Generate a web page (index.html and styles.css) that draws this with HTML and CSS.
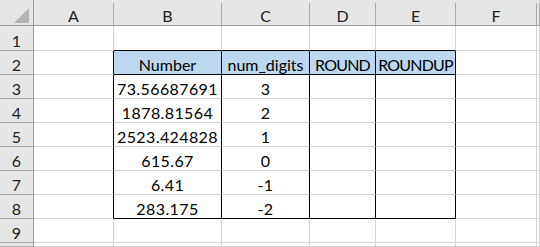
FILE: index.html
```html
<!DOCTYPE html>
<html lang="en">
<head>
    <meta charset="UTF-8">
    <title>ROUND vs ROUNDUP</title>
    <link rel="stylesheet" href="styles.css">
</head>
<body>
    <div class="sheet">
        <!-- column headers -->
        <div class="cell corner"><span class="corner-mark"></span></div>
        <div class="cell col-head">A</div>
        <div class="cell col-head">B</div>
        <div class="cell col-head">C</div>
        <div class="cell col-head">D</div>
        <div class="cell col-head">E</div>
        <div class="cell col-head">F</div>
        <div class="cell col-head"></div>

        <!-- row 1 -->
        <div class="cell row-head">1</div>
        <div class="cell"></div>
        <div class="cell above"></div>
        <div class="cell above"></div>
        <div class="cell above"></div>
        <div class="cell above"></div>
        <div class="cell"></div>
        <div class="cell"></div>

        <!-- row 2: table header -->
        <div class="cell row-head">2</div>
        <div class="cell before"></div>
        <div class="cell tbl head">Number</div>
        <div class="cell tbl head">num_digits</div>
        <div class="cell tbl head caps">ROUND</div>
        <div class="cell tbl head caps">ROUNDUP</div>
        <div class="cell"></div>
        <div class="cell"></div>

        <div class="cell row-head">3</div>
        <div class="cell before"></div>
        <div class="cell tbl num">73.56687691</div>
        <div class="cell tbl num">3</div>
        <div class="cell tbl"></div>
        <div class="cell tbl"></div>
        <div class="cell"></div>
        <div class="cell"></div>

        <div class="cell row-head">4</div>
        <div class="cell before"></div>
        <div class="cell tbl num">1878.81564</div>
        <div class="cell tbl num">2</div>
        <div class="cell tbl"></div>
        <div class="cell tbl"></div>
        <div class="cell"></div>
        <div class="cell"></div>

        <div class="cell row-head">5</div>
        <div class="cell before"></div>
        <div class="cell tbl num">2523.424828</div>
        <div class="cell tbl num">1</div>
        <div class="cell tbl"></div>
        <div class="cell tbl"></div>
        <div class="cell"></div>
        <div class="cell"></div>

        <div class="cell row-head">6</div>
        <div class="cell before"></div>
        <div class="cell tbl num">615.67</div>
        <div class="cell tbl num">0</div>
        <div class="cell tbl"></div>
        <div class="cell tbl"></div>
        <div class="cell"></div>
        <div class="cell"></div>

        <div class="cell row-head">7</div>
        <div class="cell before"></div>
        <div class="cell tbl num">6.41</div>
        <div class="cell tbl num">-1</div>
        <div class="cell tbl"></div>
        <div class="cell tbl"></div>
        <div class="cell"></div>
        <div class="cell"></div>

        <div class="cell row-head">8</div>
        <div class="cell before"></div>
        <div class="cell tbl num last">283.175</div>
        <div class="cell tbl num last">-2</div>
        <div class="cell tbl last"></div>
        <div class="cell tbl last"></div>
        <div class="cell"></div>
        <div class="cell"></div>

        <div class="cell row-head">9</div>
        <div class="cell"></div>
        <div class="cell"></div>
        <div class="cell"></div>
        <div class="cell"></div>
        <div class="cell"></div>
        <div class="cell"></div>
        <div class="cell"></div>

        <!-- row 10, cut off by the window -->
        <div class="cell row-head"></div>
        <div class="cell"></div>
        <div class="cell"></div>
        <div class="cell"></div>
        <div class="cell"></div>
        <div class="cell"></div>
        <div class="cell"></div>
        <div class="cell"></div>
    </div>
</body>
</html>
```

FILE: styles.css
```css
body {
    margin: 0;
    padding: 0;
    background: #ffffff;
    overflow: hidden;
}

/* Sheet grid: widths/heights include each cell's right/bottom line */
.sheet {
    display: grid;
    grid-template-columns: 34px 80px 108px 88px 66px 80px 81px 1fr;
    grid-template-rows: 26px 25px repeat(8, 24px) 1fr;
    width: 540px;
    height: 247px;
    font-family: 'Lato', 'Carlito', 'Liberation Sans', sans-serif;
    font-size: 16px;
    color: #000000;
}

.cell {
    box-sizing: border-box;
    border-right: 1px solid #d4d4d4;
    border-bottom: 1px solid #d4d4d4;
    display: flex;
    align-items: flex-end;
    justify-content: center;
    line-height: 18px;
    white-space: nowrap;
    overflow: visible;
    min-width: 0;
}

/* Headers */
.corner,
.col-head {
    background: linear-gradient(#ababab, #ababab) right bottom / 1px calc(100% - 3px) no-repeat, #e6e6e6;
    border-right: none;
    border-bottom: 1px solid #9b9b9b;
    padding-right: 1px;
    color: #222222;
}

.corner {
    background: #e6e6e6;
    border-right: 1px solid #9b9b9b;
    padding-right: 0;
    position: relative;
}

.corner-mark {
    position: absolute;
    left: 14px;
    top: 8px;
    width: 15px;
    height: 15px;
    background: #b4b4b4;
    clip-path: polygon(100% 0, 100% 100%, 0 100%);
}

.row-head {
    background: #e6e6e6;
    border-right: 1px solid #9b9b9b;
    border-bottom: 1px solid #ababab;
    color: #222222;
}

/* Bordered table B2:E8 */
.above {
    border-bottom-color: #000000;
}

.before {
    border-right-color: #000000;
}

.tbl {
    border-right-color: #000000;
}

.tbl.head {
    background: #bdd7ee;
    border-bottom-color: #000000;
}

.tbl.last {
    border-bottom-color: #000000;
}

/* Lato caps run wider and figures narrower than the sheet's font */
.caps {
    letter-spacing: -0.8px;
}

.num {
    letter-spacing: 0.4px;
}
```
